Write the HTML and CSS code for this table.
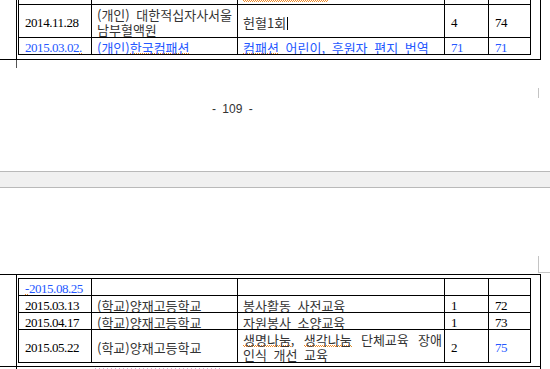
FILE: index.html
```html
<!DOCTYPE html>
<html lang="ko">
<head>
<meta charset="utf-8">
<title>봉사활동 내역</title>
<link rel="stylesheet" href="styles.css">
</head>
<body>
<div class="doc">
  <section class="page page-tail">
    <div class="frame frame-tail">
      <div class="lcell"></div>
      <div class="rcell rcell-tail">
        <div class="grid g-tail">
          <div class="c prev"></div>
          <div class="c prev"></div>
          <div class="c prev"><span class="sq"></span></div>
          <div class="c prev"></div>
          <div class="c prev"></div>

          <div class="c num"><div class="t">2014.11.28</div></div>
          <div class="c ko"><div class="t">(개인) 대한적십자사서울남부혈액원</div></div>
          <div class="c ko"><div class="t">헌혈1회<span class="caret"></span></div></div>
          <div class="c num"><div class="t">4</div></div>
          <div class="c num"><div class="t">74</div></div>

          <div class="c num blue"><div class="t">2015.03.02<span class="sp">.</span></div></div>
          <div class="c ko blue"><div class="t">(개인)<span class="sp">한국컴패션</span></div></div>
          <div class="c ko blue"><div class="t"><span class="sp">컴패션</span> 어린이, 후원자 편지 번역</div></div>
          <div class="c num blue"><div class="t">71</div></div>
          <div class="c num blue"><div class="t">71</div></div>
        </div>
      </div>
    </div>
    <div class="lmark"></div>
    <div class="rmark"></div>
    <footer class="pageno">- 109 -</footer>
  </section>

  <div class="gap"></div>

  <section class="page page-head">
    <div class="head-space"><div class="cmark"></div></div>
    <div class="frame frame-head">
      <div class="lcell"></div>
      <div class="rcell rcell-head">
        <div class="grid g-head">
          <div class="c num blue"><div class="t"><span class="sp">-</span>2015.08.25</div></div>
          <div class="c ko"></div>
          <div class="c ko"></div>
          <div class="c num"></div>
          <div class="c num"></div>

          <div class="c num"><div class="t">2015.03.13</div></div>
          <div class="c ko"><div class="t">(학교)양재고등학교</div></div>
          <div class="c ko"><div class="t">봉사활동 사전교육</div></div>
          <div class="c num"><div class="t">1</div></div>
          <div class="c num"><div class="t">72</div></div>

          <div class="c num"><div class="t">2015.04.17</div></div>
          <div class="c ko"><div class="t">(학교)양재고등학교</div></div>
          <div class="c ko"><div class="t">자원봉사 소양교육</div></div>
          <div class="c num"><div class="t">1</div></div>
          <div class="c num"><div class="t">73</div></div>

          <div class="c num"><div class="t">2015.05.22</div></div>
          <div class="c ko"><div class="t">(학교)양재고등학교</div></div>
          <div class="c ko"><div class="t just"><span class="sp">생명나눔</span>, <span class="sp">생각나눔</span> 단체교육 장애 인식 개선 교육</div></div>
          <div class="c num"><div class="t">2</div></div>
          <div class="c num blue"><div class="t">75</div></div>
        </div>
      </div>
    </div>
    <div class="frame frame-next">
      <div class="lcell"></div>
      <div class="rcell rcell-next"><div class="nextdots"></div></div>
    </div>
  </section>
</div>
</body>
</html>
```
FILE: styles.css
```css
html, body {
  margin: 0;
  padding: 0;
  background: #fff;
}
body {
  width: 550px;
  height: 369px;
  overflow: hidden;
}
.doc {
  display: flex;
  flex-direction: column;
}
.page {
  display: flex;
  flex-direction: column;
  overflow: hidden;
  background: #fff;
}
.page-tail {
  height: 171px;
}
.page-head {
  height: 181px;
}
.gap {
  height: 15px;
  background: #f0f0f0;
  border-top: 1px solid #b9b9b9;
  border-bottom: 1px solid #b9b9b9;
}

/* outer table */
.frame {
  display: flex;
  width: 541px;
  flex-shrink: 0;
}
.frame-tail {
  margin-top: -13px;
  border-bottom: 1px solid #000;
}
.frame-head {
  border-top: 1px solid #000;
  border-bottom: 1px solid #000;
}
.lcell {
  width: 17px;
  box-sizing: border-box;
  border-right: 1px solid #000;
}
.rcell {
  border-right: 1px solid #000;
  padding: 0 9px 0 1px;
}
.rcell-tail { padding-bottom: 4px; }
.rcell-head { padding-top: 3px; padding-bottom: 3px; }
.frame-next { height: 10px; }
.rcell-next { width: 513px; }
.nextdots {
  margin: 1px 0 0 77px;
  width: 126px;
  height: 1px;
  background: repeating-linear-gradient(90deg, #d7a9d6 0 1px, transparent 1px 4px);
}

/* inner table */
.grid {
  display: grid;
  grid-template-columns: 73px 146px 207px 44px 42px;
  border-left: 1px solid #000;
  border-top: 1px solid #000;
}
.g-tail { grid-template-rows: 17px 33px 17px; }
.g-head { grid-template-rows: 17px 17px 17px 33px; }

.c {
  box-sizing: border-box;
  border-right: 1px solid #000;
  border-bottom: 1px solid #000;
  display: flex;
  align-items: center;
  padding: 2px 2px 0 6px;
  min-width: 0;
  overflow: hidden;
}
.grid > .c:nth-child(5n+2),
.grid > .c:nth-child(5n+3) {
  padding-left: 5px;
}
.c.prev {
  align-items: flex-end;
  padding-top: 0;
  padding-bottom: 2px;
}
.t {
  width: 100%;
  line-height: 15px;
  white-space: normal;
}
.num {
  font-family: "Liberation Serif", "Times New Roman", serif;
  font-size: 13px;
  letter-spacing: -0.45px;
  color: #000;
}
.ko {
  font-family: "Noto Sans CJK KR", "Noto Sans", sans-serif;
  font-size: 13px;
  word-spacing: 3px;
  color: #333;
}
.blue { color: #2458ff; }
.just {
  text-align: justify;
  word-break: keep-all;
}

/* spell-check underline */
.sp {
  display: inline-block;
  line-height: 15px;
  vertical-align: top;
  background-image:
    repeating-linear-gradient(90deg, #ee8a2a 0 1px, transparent 1px 2px),
    repeating-linear-gradient(90deg, transparent 0 1px, #ee8a2a 1px 2px);
  background-size: 100% 1px, 100% 1px;
  background-position: 0 calc(100% - 1px), 0 100%;
  background-repeat: no-repeat;
}
.sq {
  display: block;
  width: 85px;
  height: 2px;
  background-image:
    repeating-linear-gradient(90deg, #ee8a2a 0 1px, transparent 1px 2px),
    repeating-linear-gradient(90deg, transparent 0 1px, #ee8a2a 1px 2px);
  background-size: 100% 1px, 100% 1px;
  background-position: 0 0, 0 1px;
  background-repeat: no-repeat;
}
.caret {
  display: inline-block;
  width: 1px;
  height: 13px;
  background: #000;
  vertical-align: -2px;
  margin-left: 1px;
}

/* page marks */
.lmark {
  margin-left: 16px;
  width: 1px;
  height: 8px;
  background: #555;
  flex-shrink: 0;
}
.rmark {
  margin: 20px 0 0 538px;
  width: 1px;
  height: 10px;
  background: #c4c4c4;
  flex-shrink: 0;
}
.pageno {
  margin-top: 4px;
  padding-left: 212px;
  font-family: "Liberation Sans", Arial, sans-serif;
  font-size: 12px;
  line-height: 14px;
  word-spacing: 3px;
  color: #333;
}
.head-space {
  height: 86px;
  box-sizing: border-box;
  padding-bottom: 1px;
  display: flex;
  justify-content: flex-end;
  align-items: flex-end;
  flex-shrink: 0;
}
.cmark {
  width: 12px;
  height: 17px;
  box-sizing: border-box;
  border-left: 1px solid #c4c4c4;
  border-bottom: 1px solid #c4c4c4;
}
```
